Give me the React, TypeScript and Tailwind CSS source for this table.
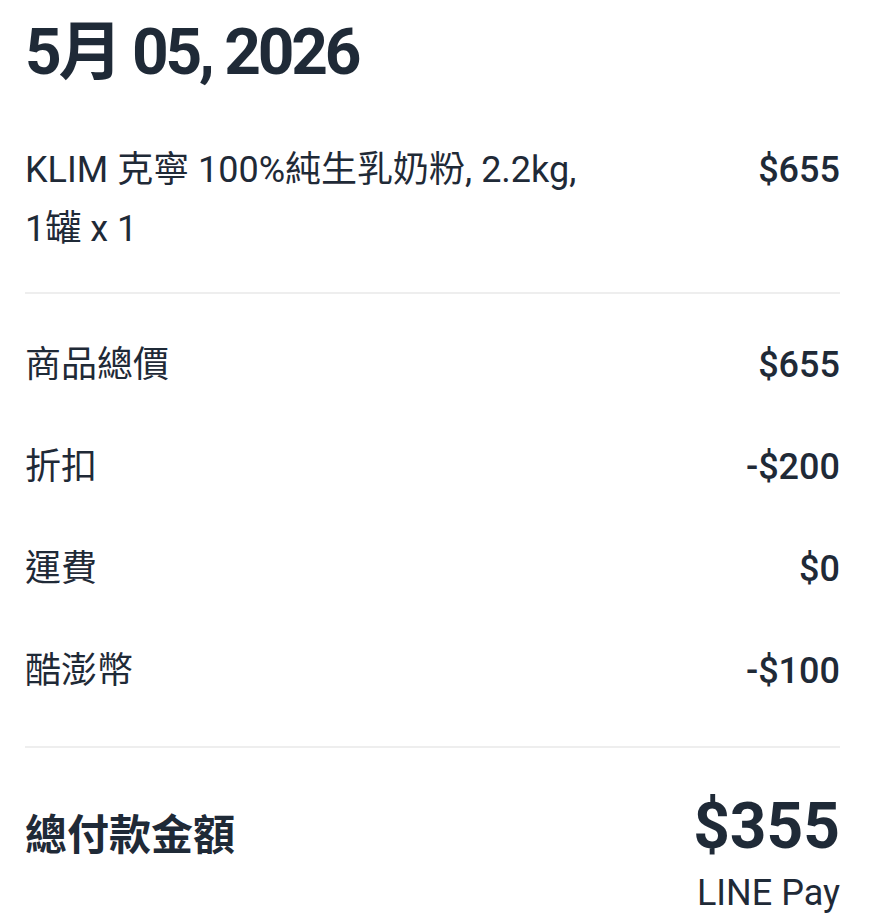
import React from 'react';

interface Line {
  label: string;
  value: string;
}

const lines: Line[] = [
  { label: '商品總價', value: '$655' },
  { label: '折扣', value: '-$200' },
  { label: '運費', value: '$0' },
  { label: '酷澎幣', value: '-$100' },
];

const App: React.FC = () => {
  return (
    <div
      className="min-h-screen bg-white text-[#1f2a37] pl-[25px] pr-[33px] pt-[21px] pb-[13px]"
      style={{ fontFamily: 'Roboto, "Noto Sans CJK TC", sans-serif' }}
    >
      {/* Order date */}
      <h1 className="text-[64px] leading-[64px] h-[64px] font-bold tracking-[-0.05em]">5月 05, 2026</h1>

      {/* Product */}
      <div className="mt-[56px] flex justify-between items-start text-[36px] leading-[59px]">
        <p className="max-w-[590px]">
          KLIM 克寧 100%純生乳奶粉, 2.2kg, <span className="whitespace-nowrap">1罐 x 1</span>
        </p>
        <span className="font-medium">$655</span>
      </div>

      <div className="mt-[33px] h-[2px] bg-[#eeeeee]" />

      {/* Price breakdown */}
      <div className="pt-[42px] pb-[45px] flex flex-col gap-[43px]">
        {lines.map((line) => (
          <div key={line.label} className="flex justify-between items-start text-[36px] leading-[59px]">
            <span>{line.label}</span>
            <span className="font-medium">{line.value}</span>
          </div>
        ))}
      </div>

      <div className="h-[2px] bg-[#eeeeee]" />

      {/* Total */}
      <div className="mt-[47px] flex justify-between items-start">
        <span className="mt-[9px] text-[42px] leading-[64px] font-bold">總付款金額</span>
        <div className="flex flex-col items-end">
          <span className="text-[64px] leading-[64px] font-bold">$355</span>
          <span className="mt-[14px] text-[36px] leading-[40px]">LINE Pay</span>
        </div>
      </div>
    </div>
  );
};

export default App;
